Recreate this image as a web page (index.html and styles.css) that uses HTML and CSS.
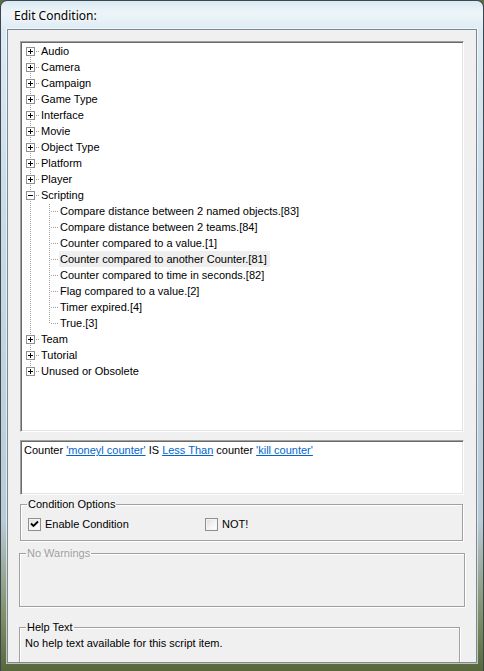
FILE: index.html
```html
<!DOCTYPE html>
<html>
<head>
<meta charset="utf-8">
<link rel="stylesheet" href="styles.css">
</head>
<body>
<div class="window">
  <div class="titlebar">Edit Condition:</div>
  <div class="client">
    <div class="tree">
      <ul class="roots">
        <li><div class="row"><span class="exp plus"></span><span class="dash"></span><span class="label">Audio</span></div></li>
        <li><div class="row"><span class="exp plus"></span><span class="dash"></span><span class="label">Camera</span></div></li>
        <li><div class="row"><span class="exp plus"></span><span class="dash"></span><span class="label">Campaign</span></div></li>
        <li><div class="row"><span class="exp plus"></span><span class="dash"></span><span class="label">Game Type</span></div></li>
        <li><div class="row"><span class="exp plus"></span><span class="dash"></span><span class="label">Interface</span></div></li>
        <li><div class="row"><span class="exp plus"></span><span class="dash"></span><span class="label">Movie</span></div></li>
        <li><div class="row"><span class="exp plus"></span><span class="dash"></span><span class="label">Object Type</span></div></li>
        <li><div class="row"><span class="exp plus"></span><span class="dash"></span><span class="label">Platform</span></div></li>
        <li><div class="row"><span class="exp plus"></span><span class="dash"></span><span class="label">Player</span></div></li>
        <li>
          <div class="row"><span class="exp minus"></span><span class="dash"></span><span class="label">Scripting</span></div>
          <ul class="children">
            <li class="row child"><span class="dash long"></span><span class="label">Compare distance between 2 named objects.[83]</span></li>
            <li class="row child"><span class="dash long"></span><span class="label">Compare distance between 2 teams.[84]</span></li>
            <li class="row child"><span class="dash long"></span><span class="label">Counter compared to a value.[1]</span></li>
            <li class="row child"><span class="dash long"></span><span class="label selected">Counter compared to another Counter.[81]</span></li>
            <li class="row child"><span class="dash long"></span><span class="label">Counter compared to time in seconds.[82]</span></li>
            <li class="row child"><span class="dash long"></span><span class="label">Flag compared to a value.[2]</span></li>
            <li class="row child"><span class="dash long"></span><span class="label">Timer expired.[4]</span></li>
            <li class="row child"><span class="dash long"></span><span class="label">True.[3]</span></li>
          </ul>
        </li>
        <li><div class="row"><span class="exp plus"></span><span class="dash"></span><span class="label">Team</span></div></li>
        <li><div class="row"><span class="exp plus"></span><span class="dash"></span><span class="label">Tutorial</span></div></li>
        <li><div class="row"><span class="exp plus"></span><span class="dash"></span><span class="label">Unused or Obsolete</span></div></li>
      </ul>
    </div>

    <div class="desc">Counter <a href="#">'moneyl counter'</a> IS <a href="#">Less Than</a> counter <a href="#">'kill counter'</a></div>

    <fieldset class="group options">
      <legend>Condition Options</legend>
      <div class="checks">
        <label class="check first"><span class="box"><svg width="11" height="11" viewBox="0 0 11 11"><path d="M2 4.5 L4.5 7 L9 2.5" fill="none" stroke="#000" stroke-width="1.8"/></svg></span>Enable Condition</label>
        <label class="check"><span class="box"></span>NOT!</label>
      </div>
    </fieldset>

    <fieldset class="group warnings">
      <legend>No Warnings</legend>
    </fieldset>

    <fieldset class="group help">
      <legend>Help Text</legend>
      <p class="helptext">No help text available for this script item.</p>
    </fieldset>
  </div>
</div>
</body>
</html>
```

FILE: styles.css
```css
html, body {
  margin: 0;
  padding: 0;
  width: 484px;
  height: 671px;
  overflow: hidden;
  background: #5e6e44;
}

.window {
  box-sizing: border-box;
  width: 484px;
  height: 671px;
  border: 1px solid #3c4650;
  border-bottom: none;
  border-radius: 7px 7px 0 0;
  padding: 0 6px 8px 6px;
  display: flex;
  flex-direction: column;
  background:
    linear-gradient(to bottom, #d9eaf2 0, #eef5f9 12px, #dcebf3 29px, #c9dce7 200px, #b9cbd6 520px, #7d8c62 620px, #56663a 671px);
}

.titlebar {
  height: 28px;
  flex: none;
  padding-left: 7px;
  font-family: "Noto Sans", "Open Sans", sans-serif;
  font-size: 12px;
  line-height: 30px;
  color: #000;
  text-shadow: 0 0 6px #fff, 0 0 3px #fff;
}

.client {
  flex: 1;
  min-height: 0;
  overflow: hidden;
  border: 1px solid #7b8794;
  box-shadow: 0 0 0 1px rgba(255,255,255,0.6);
  background: #f0f0f0;
  padding: 11px 12px 0 12px;
  font-family: "Liberation Sans", Arial, sans-serif;
  font-size: 11px;
  color: #000;
}

.tree, .desc {
  box-sizing: border-box;
  background: #fff;
  border: 1px solid;
  border-color: #a0a0a0 #ffffff #ffffff #a0a0a0;
  box-shadow: inset 1px 1px 0 #696969, inset -1px -1px 0 #e3e3e3;
}

.tree {
  height: 391px;
  padding: 1px 0 0 5px;
}

ul {
  list-style: none;
  margin: 0;
  padding: 0;
}

.roots {
  background: repeating-linear-gradient(to bottom, #a0a0a0 0 1px, transparent 1px 2px) no-repeat;
  background-position: 4px 8px;
  background-size: 1px calc(100% - 16px);
}

.row {
  display: flex;
  align-items: flex-start;
  height: 16px;
  line-height: 16px;
  white-space: nowrap;
}

.exp {
  box-sizing: border-box;
  flex: none;
  width: 9px;
  height: 9px;
  margin-top: 4px;
  border: 1px solid #919191;
  background-color: #fff;
}

.exp.plus {
  background:
    linear-gradient(#000, #000) 1px 3px / 5px 1px no-repeat,
    linear-gradient(#000, #000) 3px 1px / 1px 5px no-repeat,
    #fff;
}

.exp.minus {
  background:
    linear-gradient(#000, #000) 1px 3px / 5px 1px no-repeat,
    #fff;
}

.dash {
  flex: none;
  width: 5px;
  height: 1px;
  margin-top: 8px;
  background: repeating-linear-gradient(to right, transparent 0 1px, #a0a0a0 1px 2px);
}

.dash.long {
  width: 9px;
}

.label {
  padding: 0 3px 0 1px;
  height: 16px;
}

.label.selected {
  background: #efefef;
}

.children {
  background: repeating-linear-gradient(to bottom, #a0a0a0 0 1px, transparent 1px 2px) no-repeat;
  background-position: 23px -1px;
  background-size: 1px calc(100% - 7px);
}

.row.child {
  padding-left: 24px;
}

.desc {
  margin-top: 8px;
  height: 55px;
  padding: 3px 3px 2px;
  line-height: 13px;
}

.desc a {
  color: #0066cc;
  text-decoration: underline;
}

.group {
  margin: 0;
  padding: 0;
  border: 1px solid #a0a0a0;
  box-shadow: inset 1px 1px 0 #fff, 1px 1px 0 #fff;
  min-width: 0;
}

.group legend {
  padding: 0 1px;
  margin-left: 6px;
  line-height: 13px;
  font-size: 11px;
}

.options {
  margin-top: 3px;
  width: 443px;
  box-sizing: border-box;
  height: 43px;
}

.checks {
  display: flex;
  padding: 7px 0 0 7px;
}

.check {
  display: flex;
  align-items: center;
  height: 13px;
  line-height: 13px;
}

.check.first {
  width: 177px;
}

.box {
  box-sizing: border-box;
  width: 13px;
  height: 13px;
  margin-right: 4px;
  border: 1px solid #8e8f8f;
  background: linear-gradient(135deg, #dcdcdc 0, #f6f6f6 60%, #fff 100%);
  box-shadow: inset 0 0 0 1px #f4f4f4;
  display: flex;
  align-items: center;
  justify-content: center;
}

.box svg {
  display: block;
}

.warnings {
  margin: 6px 0 0 -1px;
  width: 446px;
  box-sizing: border-box;
  height: 60px;
}

.warnings legend {
  color: #a0a0a0;
}

.help {
  margin: 14px 0 0 -1px;
  width: 441px;
  box-sizing: border-box;
  height: 60px;
}

.helptext {
  margin: 3px 0 0 5px;
  line-height: 13px;
  color: #000;
}
```
